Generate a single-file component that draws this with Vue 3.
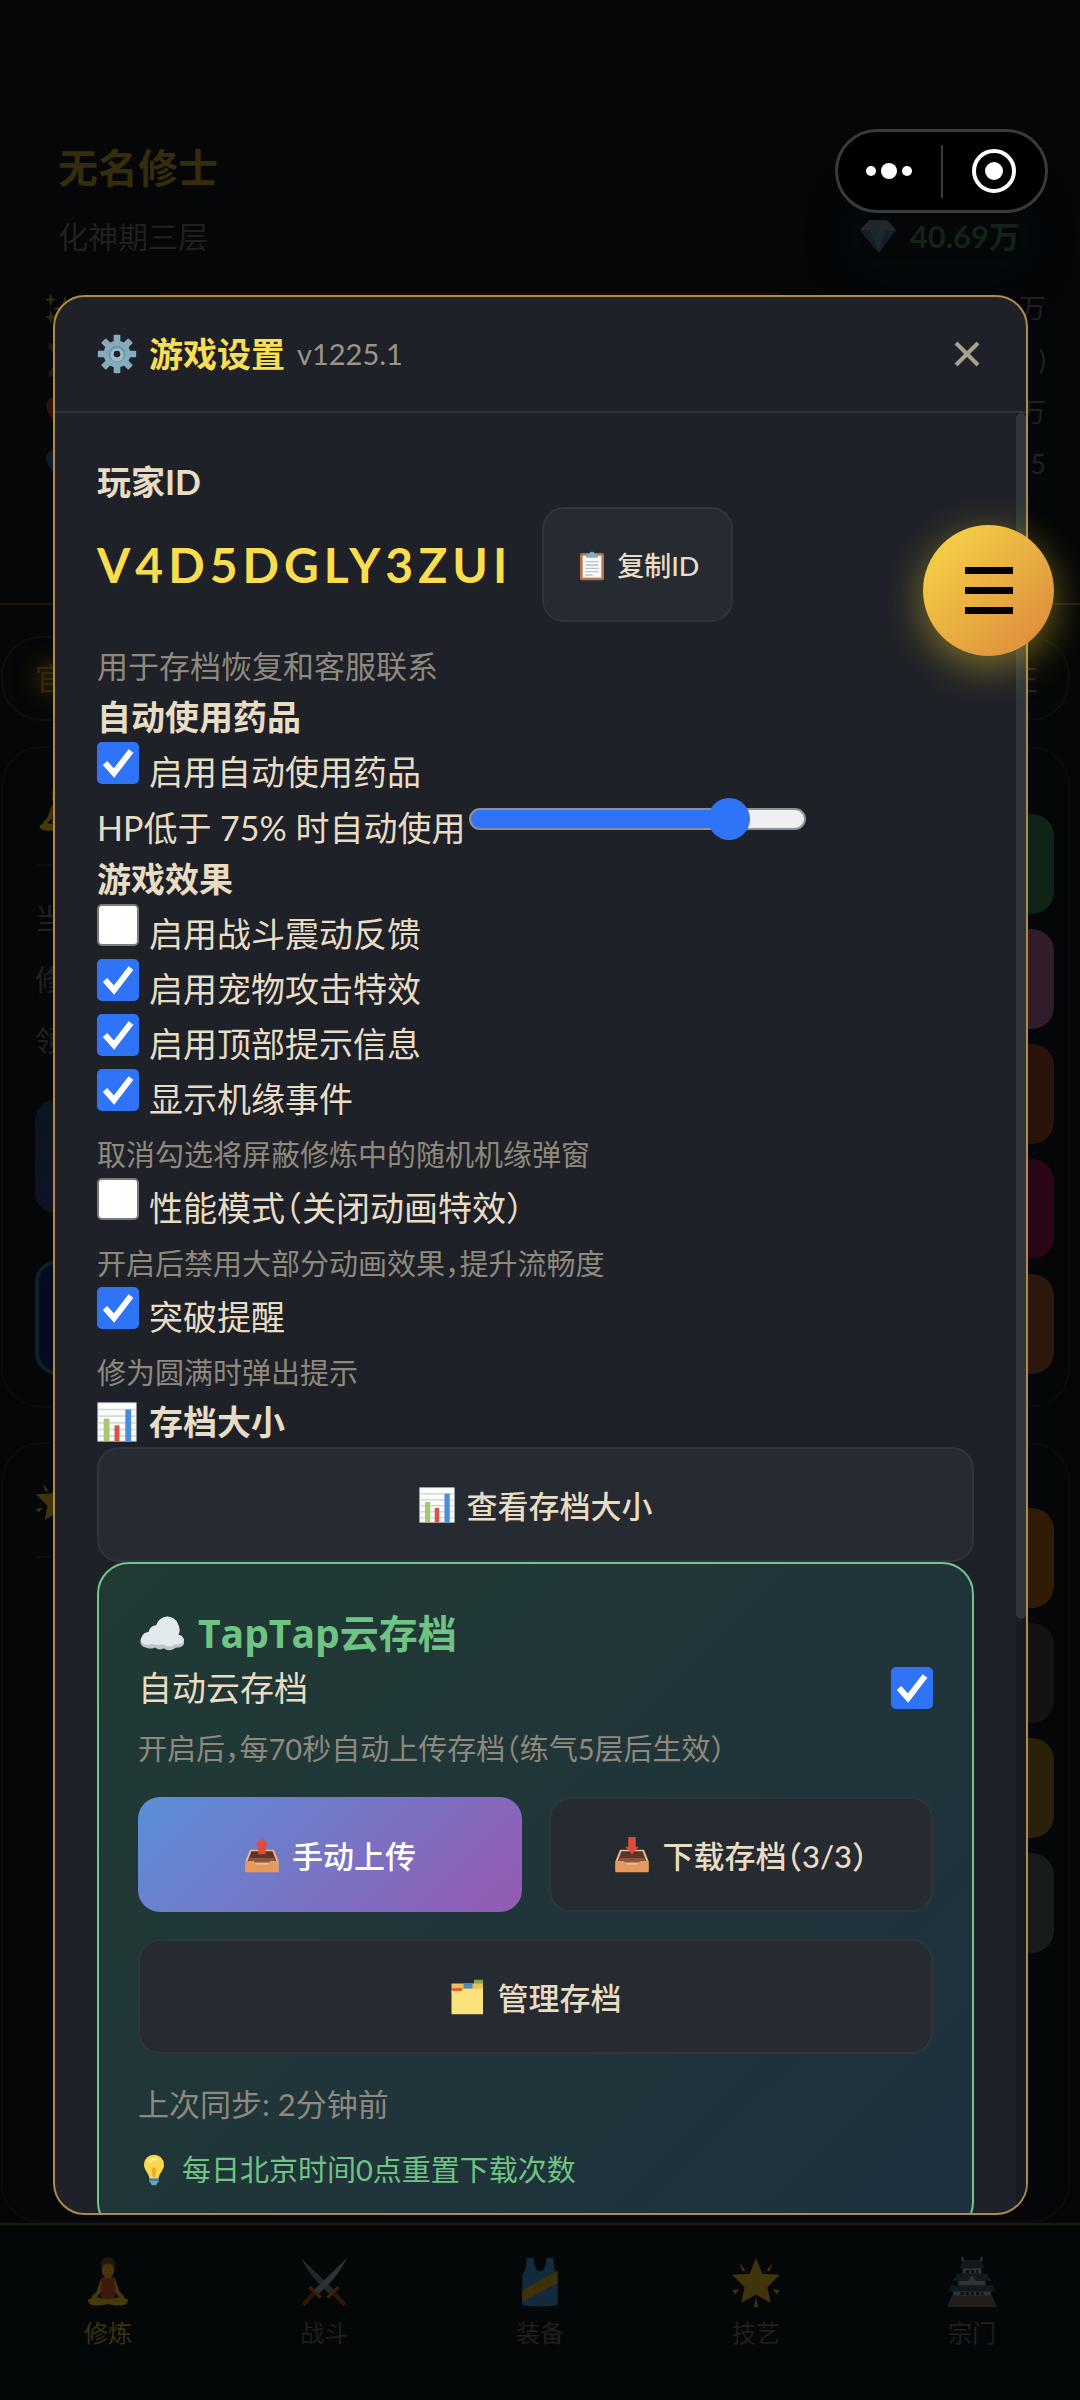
<script setup>
import { ref, computed } from "vue";

//data
let hpLimit = ref(75);
let autoPotion = ref(true);
let autoCloud = ref(true);
let effects = ref([
  { id: "shake", label: "启用战斗震动反馈", on: false },
  { id: "pet", label: "启用宠物攻击特效", on: true },
  { id: "toast", label: "启用顶部提示信息", on: true },
  { id: "event", label: "显示机缘事件", on: true, hint: "取消勾选将屏蔽修炼中的随机机缘弹窗" },
  { id: "perf", label: "性能模式（关闭动画特效）", on: false, hint: "开启后禁用大部分动画效果，提升流畅度" },
  { id: "break", label: "突破提醒", on: true, hint: "修为圆满时弹出提示" },
]);
let stats = [
  { icon: "sparkle", end: "万" },
  { icon: "hourglass", end: ")" },
  { icon: "heart", end: "万" },
  { icon: "drop", end: "5" },
];
let mainActions = ["green", "plum", "rust", "wine", "copper"];
let extraActions = ["amber", "ash", "olive", "slate"];
let tabs = [
  { icon: "meditate", label: "修炼" },
  { icon: "swords", label: "战斗" },
  { icon: "vest", label: "装备" },
  { icon: "star", label: "技艺" },
  { icon: "castle", label: "宗门" },
];
let activeTab = ref("修炼");

//computed
let sliderFill = computed(() => {
  let part = (hpLimit.value - 10) / 80;
  return { "--fill": `${part * 100}%` };
});
</script>

<template>
  <div class="app">
    <svg class="sprite" aria-hidden="true">
      <symbol id="gear" viewBox="0 0 48 48">
        <g fill="#86abbe">
          <rect v-for="a in 4" :key="a" x="20" y="1" width="8" height="46" rx="1" :transform="`rotate(${a * 45} 24 24)`" />
          <circle cx="24" cy="24" r="16" />
        </g>
        <circle cx="24" cy="24" r="10" fill="#6d94a8" />
        <circle cx="24" cy="25" r="8" fill="#9dbdcc" />
        <circle cx="24" cy="24" r="4" fill="#1e2128" />
      </symbol>
      <symbol id="clipboard" viewBox="0 0 48 48">
        <rect x="6" y="6" width="36" height="41" rx="3" fill="#b87349" />
        <rect x="10" y="10" width="28" height="33" fill="#fbfbfb" />
        <path d="M14 19h20M14 24h20M14 29h20M14 34h20M14 39h11" stroke="#b9c4ca" stroke-width="2" />
        <path d="M15 13V8h5a4 4 0 0 1 8 0h5v5z" fill="#82aec0" />
      </symbol>
      <symbol id="chart" viewBox="0 0 48 48">
        <rect x="1" y="1" width="46" height="46" fill="#fdfdfd" stroke="#c3c9cc" />
        <path d="M2 9h44M2 17h44M2 25h44M2 33h44M2 41h44" stroke="#d3d8db" stroke-width="2" />
        <path d="M8 20h7v27H8z" fill="#a6c86e" />
        <path d="M21 28h6v19h-6z" fill="#d9534a" />
        <path d="M34 9h7v38h-7z" fill="#478fd8" />
      </symbol>
      <symbol id="cloud" viewBox="0 0 48 48">
        <path d="M8 39a6 6 0 0 1-4-10 8 8 0 0 1 7-5 8 8 0 0 1 8-7 12 12 0 0 1 23-1 13 13 0 0 1 0 11 6 6 0 0 1 1 12c-3 0-4 0-6 2-4 2-8 1-10-1-3 2-7 1-9-1-4 2-7 1-10 0z" fill="#b9c6cd" />
        <path d="M8 36a5 5 0 0 1-4-8 8 8 0 0 1 7-5 8 8 0 0 1 8-7 12 12 0 0 1 23-1 13 13 0 0 1 0 11 5 5 0 0 1 1 10c-5-1-6 2-10 2s-5-2-8-2-5 1-8 0-5 1-9 0z" fill="#e3eaee" />
      </symbol>
      <symbol id="tray" viewBox="0 0 48 48">
        <path d="M8 17h32l6 15v14H2V32z" fill="#e8b98b" />
        <path d="M10 19h28l5 13H5z" fill="#5b3527" />
        <path d="M8 28h32l3 6H5z" fill="#8b5540" />
        <path d="M2 32h11l4 5h14l4-5h11v15H2z" fill="#e49a5f" />
      </symbol>
      <symbol id="outbox" viewBox="0 0 48 48">
        <use href="#tray" />
        <path d="M24 1l9 10h-4v12H19V11h-4z" fill="#e04b3a" />
      </symbol>
      <symbol id="inbox" viewBox="0 0 48 48">
        <use href="#tray" />
        <path d="M24 23l-9-10h4V0h10v13h4z" fill="#e04b3a" />
      </symbol>
      <symbol id="dividers" viewBox="0 0 48 48">
        <path d="M32 1h12v8H32z" fill="#7fa84f" />
        <path d="M2 6h42v12H2z" fill="#eec05a" />
        <path d="M18 6h12v7H18z" fill="#4a8ab5" />
        <path d="M2 12h14v6H2z" fill="#e0633c" />
        <path d="M2 16h14l3-3h25v34H2z" fill="#fbe27c" />
      </symbol>
      <symbol id="bulb" viewBox="0 0 48 48">
        <path d="M24 1a15 15 0 0 1 15 15c0 8-7 12-8 20H17c-1-8-8-12-8-20A15 15 0 0 1 24 1z" fill="#fbd94b" />
        <path d="M17 12c4-6 10-5 12-2" stroke="#fff3b0" stroke-width="3" fill="none" />
        <path d="M20 19l2 3 2-3 2 3 2-3-2 16h-4z" fill="#f3a92f" />
        <path d="M17 36h14v5l-4 6h-6l-4-6z" fill="#6fa3bd" />
        <path d="M17 39h14" stroke="#47748a" stroke-width="2" />
      </symbol>
      <symbol id="gem" viewBox="0 0 48 48">
        <path d="M12 3h24l12 13-23 31L0 16z" fill="#142029" />
        <path d="M12 3h24l12 13H0z" fill="#22272a" />
        <path d="M14 16l10-13 10 13-9 31z" fill="#1c272e" />
      </symbol>
      <symbol id="sparkle" viewBox="0 0 48 48">
        <path d="M28 8l4 13 12 4-12 4-4 13-4-13-12-4 12-4zM9 4l2 7 6 2-6 2-2 7-2-7-6-2 6-2zM9 26l2 8 6 2-6 2-2 8-2-8-6-2 6-2z" fill="#332a0c" />
      </symbol>
      <symbol id="hourglass" viewBox="0 0 48 48">
        <path d="M6 2h36v6L28 24l14 16v6H6v-6l14-16L6 8z" fill="#1c1914" />
      </symbol>
      <symbol id="heart" viewBox="0 0 48 48">
        <path d="M24 44C-8 22 4 4 14 4c6 0 10 6 10 6s4-6 10-6c10 0 22 18-10 40z" fill="#32100c" />
      </symbol>
      <symbol id="drop" viewBox="0 0 48 48">
        <path d="M24 44C-8 22 4 4 14 4c6 0 10 6 10 6s4-6 10-6c10 0 22 18-10 40z" fill="#0b1d2c" />
      </symbol>
      <symbol id="meditate" viewBox="0 0 48 48">
        <circle cx="24" cy="7" r="7" fill="#241610" />
        <ellipse cx="24" cy="13" rx="6" ry="7" fill="#46350b" />
        <path d="M17 21c4-3 10-3 14 0l4 12 5 5-3 3-7-8v9H18v-9l-7 8-3-3 5-5z" fill="#46350b" />
        <path d="M18 20h12l1 20H17z" fill="#3d190d" />
        <path d="M5 41c6-4 12-2 19 1 7-3 13-5 19-1 1 6-8 7-19 4-11 3-20 2-19-4z" fill="#46390a" />
      </symbol>
      <symbol id="swords" viewBox="0 0 48 48">
        <path d="M2 1l32 31-4 4C18 26 8 14 2 1z" fill="#20272b" />
        <path d="M46 1L14 32l4 4C30 26 40 14 46 1z" fill="#2b3236" />
        <path d="M27 39l11-10M21 39L10 29" stroke="#3a2208" stroke-width="3" />
        <path d="M34 35l10 11M14 35L4 46" stroke="#311509" stroke-width="4" />
      </symbol>
      <symbol id="vest" viewBox="0 0 48 48">
        <path d="M11 1h7c0 17 12 17 12 0h7c0 8 1 13 4 16v29c-10 2-24 2-34 0V17c3-3 4-8 4-16z" fill="#122a3b" />
        <path d="M41 13v12L7 43V32z" fill="#40300a" />
      </symbol>
      <symbol id="star" viewBox="0 0 48 48">
        <path d="M24 1l6 15 17 1-12 12 3 15-14-8-14 8 3-15L1 17l17-1z" fill="#40340c" />
        <path d="M8 6l6 7-3 1zM40 6l-6 7 3 1zM1 32l7-1-4 5zM47 32l-7-1 4 5zM24 39l2 9h-4z" fill="#443209" />
      </symbol>
      <symbol id="castle" viewBox="0 0 48 48">
        <path d="M15 3h18v13H15zM11 18h26v10H11zM6 31h36v7H6z" fill="#303235" />
        <path d="M16 3h16l4 8H12zM10 16h28l5 7H5zM4 27h40l3 6H1z" fill="#10191e" />
        <path d="M24 18l6 8H18z" fill="#303235" />
        <path d="M15 0v4M33 0v4" stroke="#39300e" stroke-width="2" />
        <path d="M18 14h12M13 35h22" stroke="#0c0e10" stroke-width="3" stroke-dasharray="3 2" />
        <path d="M5 37h38l5 11H0z" fill="#211e1c" />
      </symbol>
    </svg>

    <!-- dimmed game screen -->
    <div class="game">
      <header class="player">
        <div>
          <div class="player-name">无名修士</div>
          <div class="player-rank">化神期三层</div>
        </div>
        <div class="stones">
          <svg class="icon-m"><use href="#gem" /></svg>
          <span>40.69万</span>
        </div>
      </header>
      <div class="exp-bar"></div>
      <ul class="stats">
        <li v-for="s in stats" :key="s.icon">
          <svg class="icon-m"><use :href="'#' + s.icon" /></svg>
          <span>{{ s.end }}</span>
        </li>
      </ul>
      <div class="notice"><span class="notice-on">官</span><span>庄</span></div>
      <section class="panel panel-main">
        <div class="panel-left">
          <svg class="icon-l"><use href="#meditate" /></svg>
          <div class="panel-line"></div>
          <p>当</p>
          <p>修</p>
          <p>领</p>
          <div class="slot slot-blue"></div>
          <div class="slot slot-teal"></div>
        </div>
        <div class="panel-right">
          <div v-for="c in mainActions" :key="c" class="action" :class="c"></div>
        </div>
      </section>
      <section class="panel panel-extra">
        <div class="panel-left">
          <svg class="icon-l"><use href="#star" /></svg>
          <div class="panel-line"></div>
        </div>
        <div class="panel-right">
          <div v-for="c in extraActions" :key="c" class="action" :class="c"></div>
        </div>
      </section>
      <nav class="tabbar">
        <button
          v-for="tab in tabs"
          :key="tab.label"
          class="tab"
          :class="{ 'tab--active': activeTab === tab.label }"
          @click="activeTab = tab.label"
        >
          <svg class="icon-tab"><use :href="'#' + tab.icon" /></svg>
          <span>{{ tab.label }}</span>
        </button>
      </nav>
    </div>

    <!-- settings dialog -->
    <div class="overlay">
      <div class="modal" role="dialog" aria-labelledby="modal-title">
        <header class="modal-header">
          <h2 id="modal-title">
            <svg class="icon"><use href="#gear" /></svg>
            <span>游戏设置</span>
            <small>v1225.1</small>
          </h2>
          <button class="close" aria-label="关闭">
            <svg viewBox="0 0 26 26"><path d="M2 2l22 22M24 2L2 24" /></svg>
          </button>
        </header>
        <div class="modal-body">
          <h4>玩家ID</h4>
          <div class="id-row">
            <span class="player-id">V4D5DGLY3ZUI</span>
            <button class="btn btn-copy">
              <svg class="icon-s"><use href="#clipboard" /></svg>
              <span>复制ID</span>
            </button>
          </div>
          <p class="note">用于存档恢复和客服联系</p>

          <h4>自动使用药品</h4>
          <div class="check-row">
            <input id="potion" v-model="autoPotion" type="checkbox" />
            <label for="potion">启用自动使用药品</label>
          </div>
          <div class="range-row">
            <label for="hp">HP低于 {{ hpLimit }}% 时自动使用</label>
            <input id="hp" v-model.number="hpLimit" type="range" min="10" max="90" step="5" :style="sliderFill" />
          </div>

          <h4>游戏效果</h4>
          <template v-for="e in effects" :key="e.id">
            <div class="check-row">
              <input :id="e.id" v-model="e.on" type="checkbox" />
              <label :for="e.id">{{ e.label }}</label>
            </div>
            <p v-if="e.hint" class="hint">{{ e.hint }}</p>
          </template>

          <h4>
            <svg class="icon"><use href="#chart" /></svg>
            <span>存档大小</span>
          </h4>
          <button class="btn">
            <svg class="icon-m"><use href="#chart" /></svg>
            <span>查看存档大小</span>
          </button>

          <section class="cloud">
            <h3>
              <svg class="icon-l"><use href="#cloud" /></svg>
              <span>TapTap云存档</span>
            </h3>
            <div class="cloud-row">
              <label for="auto-cloud">自动云存档</label>
              <input id="auto-cloud" v-model="autoCloud" type="checkbox" />
            </div>
            <p class="hint cloud-hint">开启后，每70秒自动上传存档（练气5层后生效）</p>
            <div class="cloud-actions">
              <button class="btn btn-upload">
                <svg class="icon-m"><use href="#outbox" /></svg>
                <span>手动上传</span>
              </button>
              <button class="btn">
                <svg class="icon-m"><use href="#inbox" /></svg>
                <span>下载存档（3/3）</span>
              </button>
              <button class="btn btn-wide">
                <svg class="icon-m"><use href="#dividers" /></svg>
                <span>管理存档</span>
              </button>
            </div>
            <p class="note sync">上次同步: 2分钟前</p>
            <p class="hint tip">
              <svg class="icon-s"><use href="#bulb" /></svg>
              <span>每日北京时间0点重置下载次数</span>
            </p>
          </section>
          <div class="scrollbar"><div class="scroll-thumb"></div></div>
        </div>
      </div>
    </div>

    <button class="fab" aria-label="菜单"><i></i><i></i><i></i></button>

    <div class="capsule">
      <button aria-label="更多">
        <svg viewBox="0 0 48 48">
          <circle cx="6" cy="24" r="5" />
          <circle cx="24" cy="24" r="8" />
          <circle cx="42" cy="24" r="5" />
        </svg>
      </button>
      <span class="capsule-line"></span>
      <button aria-label="退出">
        <svg viewBox="0 0 48 48">
          <circle cx="24" cy="24" r="20" fill="none" stroke="#fff" stroke-width="4" />
          <circle cx="24" cy="24" r="9" />
        </svg>
      </button>
    </div>
  </div>
</template>

<style>
body {
  background: #040608;
}
</style>

<style scoped>
.app {
  position: relative;
  height: 100vh;
  overflow: hidden;
  font-family: Lato, "Noto Sans CJK SC", sans-serif;
  font-feature-settings: "halt";
  font-size: 34px;
  color: #e8dcc4;
}

.app * {
  box-sizing: border-box;
}

.sprite {
  position: absolute;
  width: 0;
  height: 0;
}

h2,
h3,
h4,
p,
ul {
  margin: 0;
  padding: 0;
  list-style: none;
}

button {
  font: inherit;
  font-feature-settings: inherit;
  color: inherit;
  border: 0;
  padding: 0;
  background: none;
  cursor: pointer;
}

svg {
  display: block;
  flex-shrink: 0;
}

.icon {
  width: 40px;
  height: 40px;
}

.icon-s {
  width: 32px;
  height: 32px;
}

.icon-m {
  width: 36px;
  height: 36px;
}

.icon-l {
  width: 46px;
  height: 46px;
}

/* game screen */
.game {
  height: 100%;
  display: flex;
  flex-direction: column;
  color: #202020;
  background: #040608;
}

.player {
  display: flex;
  justify-content: space-between;
  align-items: flex-end;
  padding: 138px 60px 0 58px;
}

.player-name {
  font-size: 40px;
  font-weight: 700;
  line-height: 60px;
  color: #352c0c;
}

.player-rank {
  margin-top: 14px;
  font-size: 30px;
  line-height: 48px;
}

.stones {
  display: flex;
  align-items: center;
  gap: 14px;
  font-size: 31px;
  font-weight: 700;
  line-height: 48px;
  color: #132318;
  border-radius: 24px;
  box-shadow: 0 0 40px 10px #050c0e;
}

.exp-bar {
  margin: 32px 300px 0 160px;
  height: 4px;
  background: #150e08;
}

.stats {
  padding: 0 34px 0 44px;
  height: 323px;
  font-size: 27px;
  line-height: 52px;
  margin-top: -14px;
  border-bottom: 2px solid #1c180b;
}

.stats li {
  display: flex;
  align-items: center;
  justify-content: space-between;
}

.notice {
  display: flex;
  justify-content: space-between;
  margin: 31px 10px 0 1px;
  padding: 0 30px 0 32px;
  font-size: 31px;
  line-height: 81px;
  border: 2px solid #0c0e10;
  border-radius: 40px;
  background: #050708;
}

.notice-on {
  color: #332b08;
  text-shadow: 0 0 24px #6a5800;
}

.panel {
  display: flex;
  justify-content: space-between;
  margin: 25px 10px 0 1px;
  padding: 0 14px 0 32px;
  border: 2px solid #0a0c0e;
  border-radius: 40px;
  background: #040607;
}

.panel-main {
  height: 662px;
}

.panel-extra {
  flex: 1;
  margin-top: 34px;
}

.panel-left {
  padding-top: 38px;
  width: 400px;
}

.panel-extra .panel-left {
  padding-top: 34px;
}

.panel-line {
  height: 2px;
  margin: 32px 0 22px;
  background: #0b0d0e;
}

.panel-left p {
  font-size: 29px;
  line-height: 61px;
}

.slot {
  height: 115px;
  margin-top: 28px;
  border-radius: 22px;
}

.slot-blue {
  background: linear-gradient(#0b1521, #101226);
}

.slot-teal {
  margin-top: 46px;
  background: #040a20;
  border: 4px solid #082226;
}

.panel-right {
  width: 400px;
  padding-top: 66px;
  display: flex;
  flex-direction: column;
  gap: 15px;
}

.panel-extra .panel-right {
  padding-top: 64px;
}

.action {
  height: 100px;
  border-radius: 22px;
}

.green {
  background: #0f2417;
}

.plum {
  background: #321c2b;
}

.rust {
  background: #29130b;
}

.wine {
  background: #290516;
}

.copper {
  background: #2e170d;
}

.amber {
  background: #301c04;
}

.ash {
  background: #141213;
}

.olive {
  background: #2b200a;
}

.slate {
  background: #191a1a;
}

.tabbar {
  display: flex;
  height: 177px;
  padding-top: 32px;
  background: #040708;
  border-top: 2px solid #211a0e;
}

.tab {
  flex: 1;
  display: flex;
  flex-direction: column;
  align-items: center;
  gap: 8px;
  font-size: 24px;
  line-height: 36px;
  color: #1f1f1e;
  height: 94px;
}

.tab--active {
  color: #3c320b;
}

.icon-tab {
  width: 50px;
  height: 50px;
}

/* dialog */
.overlay {
  position: absolute;
  inset: 0;
  display: flex;
  align-items: center;
  padding: 110px 52px 0 53px;
}

.modal {
  display: flex;
  flex-direction: column;
  width: 100%;
  height: 80vh;
  overflow: hidden;
  background: #1e2128;
  border: 2px solid #b08a46;
  border-radius: 32px;
}

.modal-header {
  display: flex;
  justify-content: space-between;
  align-items: center;
  padding: 32px 42px;
  border-bottom: 2px solid #30363c;
}

.modal-header h2 {
  display: flex;
  align-items: center;
  gap: 12px;
  font-size: 34px;
  line-height: 50px;
  color: #f8de55;
}

.modal-header small {
  font-size: 29px;
  font-weight: 400;
  color: #9c9486;
}

.close {
  width: 34px;
  height: 34px;
  padding: 4px;
}

.close svg {
  width: 26px;
  height: 26px;
  stroke: #aaa08e;
  stroke-width: 4;
}

.modal-body {
  position: relative;
  flex: 1;
  min-height: 0;
  overflow: hidden;
  padding: 43px 52px 42px 42px;
}

h4 {
  display: flex;
  align-items: center;
  gap: 12px;
  font-size: 34px;
  font-weight: 700;
  line-height: 51px;
}

.id-row {
  display: flex;
  align-items: center;
  gap: 30px;
}

.player-id {
  font-size: 48px;
  font-weight: 700;
  letter-spacing: 5px;
  color: #f9dd4e;
}

.note {
  margin-top: 20px;
  font-size: 31px;
  line-height: 49px;
  color: #8f897d;
}

.hint {
  margin-top: 7px;
  font-size: 29px;
  line-height: 47px;
  color: #8f897d;
}

.check-row {
  display: flex;
  gap: 10px;
}

.check-row label {
  margin-top: 5px;
  line-height: 50px;
}

input[type="checkbox"] {
  appearance: none;
  flex-shrink: 0;
  width: 42px;
  height: 42px;
  margin: 0;
  background: #fff;
  border: 2px solid #7b7b7e;
  border-radius: 5px;
}

input[type="checkbox"]:checked {
  border: 0;
  background: #2f73f6
    url("data:image/svg+xml,%3Csvg xmlns='http://www.w3.org/2000/svg' viewBox='0 0 42 42'%3E%3Cpath d='M8 21l9 10L34 9' fill='none' stroke='white' stroke-width='6'/%3E%3C/svg%3E");
}

.range-row {
  display: flex;
  align-items: center;
  gap: 4px;
}

.range-row label {
  padding-top: 6px;
  line-height: 50px;
}

input[type="range"] {
  appearance: none;
  width: 337px;
  height: 42px;
  margin: 0 0 12px;
  background: none;
}

input[type="range"]::-webkit-slider-runnable-track {
  height: 22px;
  border: 2px solid #8d9096;
  border-radius: 11px;
  background: linear-gradient(90deg, #2f73f6 var(--fill), #efefef var(--fill));
}

input[type="range"]::-webkit-slider-thumb {
  appearance: none;
  width: 42px;
  height: 42px;
  margin-top: -12px;
  border-radius: 50%;
  background: #2f73f6;
}

.btn {
  display: flex;
  align-items: center;
  justify-content: center;
  gap: 12px;
  width: 100%;
  height: 115px;
  font-size: 31px;
  font-weight: 500;
  background: #262a31;
  border: 2px solid #2f353b;
  border-radius: 22px;
}

.btn-copy {
  width: auto;
  gap: 9px;
  padding: 0 32px;
  font-size: 27px;
}

.cloud {
  padding: 39px;
  background: linear-gradient(135deg, #213a34, #1f303f);
  border: 2px solid #72c58c;
  border-radius: 32px;
}

.cloud h3 {
  display: flex;
  align-items: center;
  gap: 14px;
  font-family: "Open Sans", "Noto Sans CJK SC", sans-serif;
  font-size: 39px;
  line-height: 60px;
  color: #6fc483;
}

.cloud-row {
  display: flex;
  align-items: center;
  justify-content: space-between;
  line-height: 50px;
}

.cloud-hint {
  margin-top: 12px;
}

.cloud-actions {
  display: grid;
  grid-template-columns: 1fr 1fr;
  gap: 27px;
  margin-top: 25px;
}

.btn-upload {
  color: #fff;
  border: 0;
  background: linear-gradient(135deg, #5a8fd8, #955ab2);
}

.btn-wide {
  grid-column: span 2;
}

.sync {
  margin-top: 26px;
}

.tip {
  display: flex;
  align-items: center;
  gap: 12px;
  margin-top: 17px;
  color: #6fc483;
}

.scrollbar {
  position: absolute;
  top: 0;
  right: 0;
  bottom: 0;
  width: 10px;
  background: #181b21;
}

.scroll-thumb {
  height: 67%;
  border-radius: 5px;
  background: #30363c;
}

/* floating controls */
.fab {
  position: absolute;
  top: 525px;
  right: 26px;
  width: 131px;
  height: 131px;
  display: flex;
  flex-direction: column;
  align-items: center;
  justify-content: center;
  gap: 13px;
  border-radius: 50%;
  background: linear-gradient(135deg, #f9d947, #da853c);
  box-shadow: 0 10px 40px rgba(248, 216, 40, 0.45);
}

.fab i {
  width: 48px;
  height: 7px;
  background: #000;
}

.capsule {
  position: absolute;
  top: 129px;
  right: 32px;
  width: 213px;
  height: 84px;
  display: flex;
  align-items: center;
  background: #010102;
  border: 3px solid #3a3a3b;
  border-radius: 42px;
}

.capsule button {
  flex: 1;
  display: flex;
  justify-content: center;
}

.capsule svg {
  width: 48px;
  height: 48px;
  fill: #fff;
}

.capsule-line {
  width: 2px;
  height: 53px;
  background: #3a3a3b;
}
</style>
